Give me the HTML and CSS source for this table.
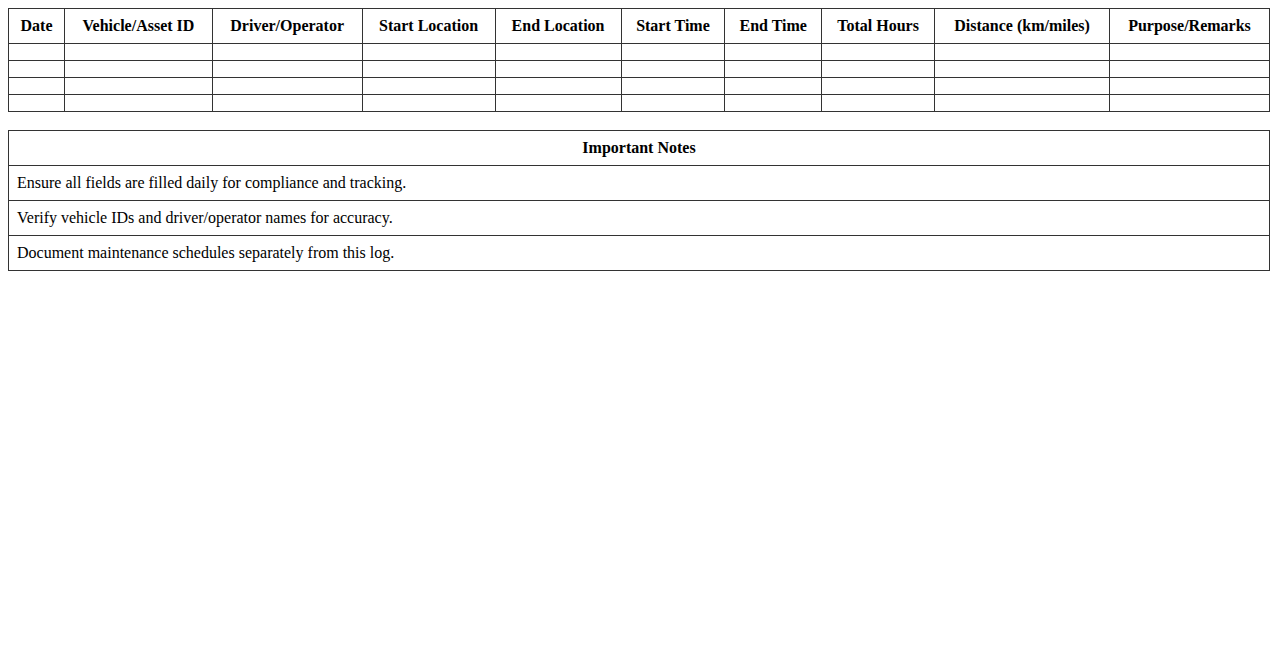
FILE: index.html
```html
<!DOCTYPE html>
<html>
<head>
<meta charset="utf-8">
<link rel="stylesheet" href="styles.css">
</head>
<body>
<table class="log">
  <thead>
    <tr>
      <th>Date</th>
      <th>Vehicle/Asset ID</th>
      <th>Driver/Operator</th>
      <th>Start Location</th>
      <th>End Location</th>
      <th>Start Time</th>
      <th>End Time</th>
      <th>Total Hours</th>
      <th>Distance (km/miles)</th>
      <th>Purpose/Remarks</th>
    </tr>
  </thead>
  <tbody>
    <tr><td></td><td></td><td></td><td></td><td></td><td></td><td></td><td></td><td></td><td></td></tr>
    <tr><td></td><td></td><td></td><td></td><td></td><td></td><td></td><td></td><td></td><td></td></tr>
    <tr><td></td><td></td><td></td><td></td><td></td><td></td><td></td><td></td><td></td><td></td></tr>
    <tr><td></td><td></td><td></td><td></td><td></td><td></td><td></td><td></td><td></td><td></td></tr>
  </tbody>
</table>
<table class="notes">
  <thead>
    <tr><th>Important Notes</th></tr>
  </thead>
  <tbody>
    <tr><td>Ensure all fields are filled daily for compliance and tracking.</td></tr>
    <tr><td>Verify vehicle IDs and driver/operator names for accuracy.</td></tr>
    <tr><td>Document maintenance schedules separately from this log.</td></tr>
  </tbody>
</table>
</body>
</html>
```
FILE: styles.css
```css
body {
  margin: 8px;
  font-family: "Liberation Serif", "Times New Roman", serif;
  font-size: 16px;
  color: #000;
  background: #fff;
}
table {
  width: 100%;
  border-collapse: collapse;
}
th, td {
  border: 1px solid #333;
  padding: 8px;
  text-align: left;
}
th {
  text-align: center;
  font-weight: bold;
}
.log {
  margin-bottom: 18px;
}
```
